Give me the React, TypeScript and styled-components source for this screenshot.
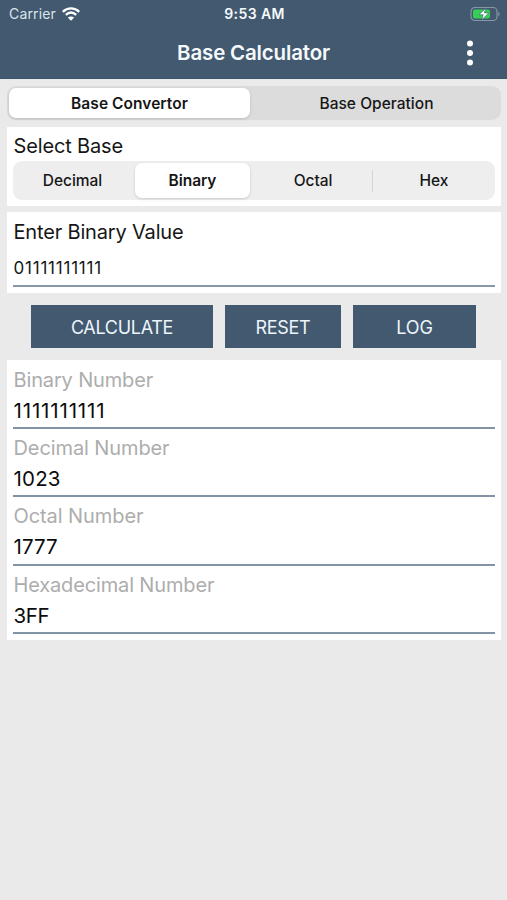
import React, { useState } from "react";
import styled, { createGlobalStyle } from "styled-components";

const GlobalStyle = createGlobalStyle`
  * { box-sizing: border-box; }
  body {
    margin: 0;
    background: #eaeaea;
    font-family: Inter, "Liberation Sans", sans-serif;
    color: #161616;
  }
  button { font-family: inherit; color: inherit; border: 0; padding: 0; }
`;

const Screen = styled.div`
  width: 507px;
  height: 900px;
  overflow: hidden;
  background: #eaeaea;
`;

const Header = styled.header`
  height: 79px;
  background: #42596f;
  border-bottom: 1px solid #3b566b;
  color: #f5f9fc;
`;

const StatusBar = styled.div`
  height: 27px;
  padding: 0 7px 0 9px;
  display: grid;
  grid-template-columns: 1fr auto 1fr;
  align-items: center;
  font-size: 14px;
`;

const Carrier = styled.div`
  display: flex;
  align-items: center;
  gap: 6px;
  color: #dce4eb;
  letter-spacing: 0.15px;
`;

const Clock = styled.div`
  font-weight: 600;
  letter-spacing: 0.4px;
`;

const BatteryIcon = styled.svg`
  justify-self: end;
`;

const TitleBar = styled.div`
  height: 51px;
  display: grid;
  grid-template-columns: 74px 1fr 74px;
  align-items: center;
`;

const Title = styled.h1`
  grid-column: 2;
  margin: 0;
  text-align: center;
  font-size: 20.5px;
  font-weight: 600;
  line-height: 24px;
  letter-spacing: -0.17px;
`;

const MenuButton = styled.button`
  display: flex;
  justify-content: center;
  background: transparent;
`;

const Content = styled.main`
  padding: 7px 6px 0 7px;
`;

const Segments = styled.div<{ $tone: string; $height: number; $columns: string }>`
  display: grid;
  grid-template-columns: ${(p) => p.$columns};
  column-gap: 5px;
  height: ${(p) => p.$height}px;
  padding: 2px 3px 2px 2px;
  border-radius: 9px;
  background: ${(p) => p.$tone};
`;

const Segment = styled.button<{ $active: boolean; $divided?: boolean }>`
  display: flex;
  align-items: center;
  justify-content: center;
  border-radius: 7px;
  font-size: 15.5px;
  font-weight: ${(p) => (p.$active ? 600 : 500)};
  background: ${(p) => (p.$active ? "#fff" : "transparent")};
  box-shadow: ${(p) => (p.$active ? "0 1px 3px rgba(0, 0, 0, 0.15)" : "none")};
  ${(p) =>
    p.$divided &&
    `&::before {
      content: "";
      width: 1px;
      height: 22px;
      margin-left: -4px;
      margin-right: 3px;
      background: #d5d5d6;
    }`}
`;

const SegmentText = styled.span<{ $track: number }>`
  flex: 1;
  letter-spacing: ${(p) => p.$track}px;
`;

const Card = styled.section<{ $height: number; $top: number; $inset?: number }>`
  height: ${(p) => p.$height}px;
  margin-top: ${(p) => p.$top}px;
  padding: ${(p) => p.$inset ?? 0}px 6px 0;
  background: #fff;
`;

const CardTitle = styled.h2<{ $track: number; $lead: number }>`
  margin: 0;
  padding: 7px 0 0 0.5px;
  height: 34px;
  font-size: 20px;
  font-weight: 400;
  line-height: ${(p) => p.$lead}px;
  letter-spacing: ${(p) => p.$track}px;
`;

const ValueInput = styled.input`
  display: block;
  width: 100%;
  height: 41px;
  padding: 4px 0 0 0.5px;
  border: 0;
  border-bottom: 2px solid #8799a9;
  outline: 0;
  font: 400 17px Inter, "Liberation Sans", sans-serif;
  letter-spacing: 0.78px;
  color: #161616;
`;

const Actions = styled.div`
  display: grid;
  grid-template-columns: 182px 116px 123px;
  padding-left: 24px;
  column-gap: 12px;
  height: 43px;
  margin-top: 12px;
`;

const Action = styled.button<{ $track: number }>`
  background: #42596f;
  color: #edf5fb;
  font-size: 18px;
  padding-top: 1px;
  letter-spacing: ${(p) => p.$track}px;
`;

const Result = styled.div`
  height: 68.3px;
  border-bottom: 2px solid #8193a4;
`;

const ResultLabel = styled.div<{ $track: number }>`
  padding: 6px 0 0 0.5px;
  height: 36px;
  color: #adadad;
  font-size: 20px;
  line-height: 26px;
  letter-spacing: ${(p) => p.$track}px;
`;

const ResultValue = styled.div<{ $track: number }>`
  padding-left: 0.5px;
  color: #0c0c0c;
  font-size: 20.5px;
  line-height: 28px;
  letter-spacing: ${(p) => p.$track}px;
`;

function WifiIcon() {
  return (
    <svg width="18" height="14" viewBox="0 0 18 14" fill="none" stroke="#fff">
      <path d="M.8 4.8C5.6.2 12.4.2 17.2 4.8" strokeWidth="2.4" />
      <path d="M3.8 7.9C7 5 11 5 14.2 7.9" strokeWidth="2.3" />
      <path d="M9 13.8 5.8 10.6c1.8-1.6 4.6-1.6 6.4 0Z" fill="#fff" stroke="none" />
    </svg>
  );
}

function Battery() {
  return (
    <BatteryIcon width="30" height="16" viewBox="0 0 30 16" fill="none">
      <rect x="1" y="1.5" width="26" height="13" rx="3.8" stroke="#8697a3" strokeWidth="1.2" />
      <rect x="3" y="3.4" width="17" height="9.2" rx="2" fill="#35cf56" />
      <path d="M28.3 5.5c1.7.8 1.7 4.2 0 5Z" fill="#8697a3" />
      <path d="M15.8 2.2 9 8.7h4.2l-1.4 5.2 6.9-7h-4.4Z" fill="#fff" stroke="#42596f" strokeWidth=".6" />
    </BatteryIcon>
  );
}

const tabs = [
  { name: "Base Convertor", track: 0.05 },
  { name: "Base Operation", track: 0.02 },
];

const bases = ["Decimal", "Binary", "Octal", "Hex"];

const results = [
  { label: "Binary Number", value: "1111111111", track: -0.15, valueTrack: 0.85 },
  { label: "Decimal Number", value: "1023", track: -0.1, valueTrack: 0.2 },
  { label: "Octal Number", value: "1777", track: -0.08, valueTrack: 0.05 },
  { label: "Hexadecimal Number", value: "3FF", track: -0.15, valueTrack: -0.4 },
];

export default function App() {
  const [tab, setTab] = useState("Base Convertor");
  const [base, setBase] = useState("Binary");
  const [value, setValue] = useState("01111111111");

  return (
    <Screen>
      <GlobalStyle />
      <Header>
        <StatusBar>
          <Carrier>Carrier <WifiIcon /></Carrier>
          <Clock>9:53 AM</Clock>
          <Battery />
        </StatusBar>
        <TitleBar>
          <Title>Base Calculator</Title>
          <MenuButton aria-label="Menu">
            <svg width="8" height="28" viewBox="0 0 8 28" fill="#fff">
              <circle cx="4" cy="4.5" r="3" />
              <circle cx="4" cy="14" r="3" />
              <circle cx="4" cy="23.5" r="3" />
            </svg>
          </MenuButton>
        </TitleBar>
      </Header>
      <Content>
        <Segments $tone="#dcdcdc" $height={34} $columns="241px 1fr">
          {tabs.map((t) => (
            <Segment key={t.name} $active={tab === t.name} onClick={() => setTab(t.name)}>
              <SegmentText $track={t.track}>{t.name}</SegmentText>
            </Segment>
          ))}
        </Segments>
        <Card $height={79} $top={7}>
          <CardTitle $track={-0.15} $lead={25}>Select Base</CardTitle>
          <Segments $tone="#eeeeef" $height={39} $columns="115px 115px 116px 1fr">
            {bases.map((b) => (
              <Segment key={b} $active={base === b} $divided={b === "Hex"} onClick={() => setBase(b)}>
                <SegmentText $track={-0.05}>{b}</SegmentText>
              </Segment>
            ))}
          </Segments>
        </Card>
        <Card $height={81} $top={6}>
          <CardTitle $track={-0.17} $lead={26}>Enter Binary Value</CardTitle>
          <ValueInput value={value} onChange={(e) => setValue(e.target.value)} />
        </Card>
        <Actions>
          <Action $track={-0.3}>CALCULATE</Action>
          <Action $track={-0.3}>RESET</Action>
          <Action $track={-0.2}>LOG</Action>
        </Actions>
        <Card $height={280} $top={12} $inset={0.7}>
          {results.map((r) => (
            <Result key={r.label}>
              <ResultLabel $track={r.track}>{r.label}</ResultLabel>
              <ResultValue $track={r.valueTrack}>{r.value}</ResultValue>
            </Result>
          ))}
        </Card>
      </Content>
    </Screen>
  );
}
